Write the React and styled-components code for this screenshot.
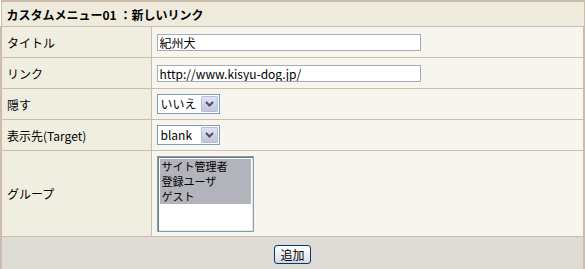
import styled, { createGlobalStyle } from "styled-components"

const Global = createGlobalStyle`
    body {
        margin: 0;
        background: #ffffff;
        font-family: "MS UI Gothic", "Noto Sans CJK JP", "Liberation Sans", sans-serif;
        font-size: 12px;
        color: #000;
    }
`

const Table = styled.table`
    width: 585px;
    border-collapse: collapse;
    border: 1px solid #cbbcae;
`
const LabelCol = styled.col`
    width: 150px;
`
const HeadCell = styled.th`
    height: 24px;
    padding: 0 5px;
    text-align: left;
    font-size: 12px;
    font-weight: bold;
    background-color: #eeebdd;
    border: 1px solid #cbbcae;
    border-top: 2px solid #cbbcae;
`
const Label = styled.td`
    height: ${props => props.tall ? "85px" : "30px"};
    padding: 0 0 0 5px;
    background-color: #f0ede1;
    border: 1px solid #cbbcae;
    border-left: 2px solid #cbbcae;
    vertical-align: middle;
`
const Value = styled.td`
    padding: 0 5px;
    background-color: #f7f6ee;
    border: 1px solid #cbbcae;
    border-right: 2px solid #cbbcae;
    vertical-align: middle;
`
const Footer = styled.td`
    height: 31px;
    text-align: center;
    background-color: #dfdcd5;
    border: 1px solid #cbbcae;
    border-width: 1px 2px 2px 2px;
`
const TextInput = styled.input`
    display: block;
    box-sizing: border-box;
    width: 264px;
    height: 17px;
    margin: 0;
    padding: 0 2px;
    border: 1px solid #a5acb2;
    background: #fff;
    font-family: "MS UI Gothic", "Noto Sans CJK JP", "Liberation Sans", sans-serif;
    font-size: 12px;
    color: #000;
    outline: none;
`
const SelectBox = styled.div`
    display: flex;
    box-sizing: border-box;
    width: 63px;
    height: 20px;
    border: 1px solid #7f9db9;
    background: #fff;
`
const SelectText = styled.span`
    flex: 1;
    padding-left: 3px;
    line-height: 18px;
    white-space: nowrap;
    overflow: hidden;
`
const ArrowButton = styled.span`
    display: flex;
    align-items: center;
    justify-content: center;
    width: 15px;
    margin: 1px;
    border: 1px solid #b8bfd8;
    border-radius: 1px;
    background: linear-gradient(#dfe3f4, #c2c6dc);
`
const ListBox = styled.div`
    box-sizing: border-box;
    width: 97px;
    height: 76px;
    border: 1px solid #7f9db9;
    box-shadow: inset 1px 1px 0 #7a7a7a, inset -1px -1px 0 #e9e7df;
    background: #fff;
    padding: 2px;
`
const ListItem = styled.div`
    height: 15px;
    line-height: 15px;
    padding-left: 2px;
    font-size: 11px;
    white-space: nowrap;
    background: ${props => props.selected ? "#b3b3bb" : "transparent"};
`
const Button = styled.button`
    height: 19px;
    width: 37px;
    padding: 0;
    border: 1px solid #003c74;
    border-radius: 3px;
    background: linear-gradient(#ffffff, #eceaf0 60%, #d6d4e0);
    font-family: "MS UI Gothic", "Noto Sans CJK JP", "Liberation Sans", sans-serif;
    font-size: 12px;
    color: #000;
    vertical-align: middle;
`

const Arrow = () => (
    <svg width="9" height="6" viewBox="0 0 9 6">
        <path d="M1 1 L4.5 4.5 L8 1" fill="none" stroke="#4d4d5e" strokeWidth="2" />
    </svg>
)

const Select = ({ value }) => (
    <SelectBox>
        <SelectText>{value}</SelectText>
        <ArrowButton><Arrow /></ArrowButton>
    </SelectBox>
)

const App = () => {
    return (
        <>
            <Global />
            <Table>
                <colgroup>
                    <LabelCol />
                    <col />
                </colgroup>
                <thead>
                    <tr>
                        <HeadCell colSpan={2}>カスタムメニュー01 ：新しいリンク</HeadCell>
                    </tr>
                </thead>
                <tbody>
                    <tr>
                        <Label>タイトル</Label>
                        <Value><TextInput defaultValue="紀州犬" /></Value>
                    </tr>
                    <tr>
                        <Label>リンク</Label>
                        <Value><TextInput defaultValue="http://www.kisyu-dog.jp/" /></Value>
                    </tr>
                    <tr>
                        <Label>隠す</Label>
                        <Value><Select value="いいえ" /></Value>
                    </tr>
                    <tr>
                        <Label>表示先(Target)</Label>
                        <Value><Select value="blank" /></Value>
                    </tr>
                    <tr>
                        <Label tall>グループ</Label>
                        <Value>
                            <ListBox role="listbox">
                                <ListItem selected>サイト管理者</ListItem>
                                <ListItem selected>登録ユーザ</ListItem>
                                <ListItem selected>ゲスト</ListItem>
                            </ListBox>
                        </Value>
                    </tr>
                    <tr>
                        <Footer colSpan={2}><Button>追加</Button></Footer>
                    </tr>
                </tbody>
            </Table>
        </>
    )
}

export default App
